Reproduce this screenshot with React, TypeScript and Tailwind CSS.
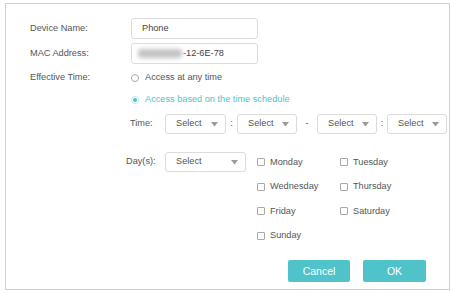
import React from 'react'

const FONT = { fontFamily: '"Liberation Sans", Arial, sans-serif' }

function Arrow() {
  return (
    <svg width="7" height="5" viewBox="0 0 7 5" className="shrink-0">
      <path d="M0 0 L7 0 L3.5 4.5 Z" fill="#9a9a9a" />
    </svg>
  )
}

function SelectBox({ width }: { width: string }) {
  return (
    <div className={`${width} shrink-0 h-[20px] border border-[#dcdcdc] rounded-[3px] bg-white flex items-center justify-between pl-[10px] pr-[7px] text-[#555]`}>
      <span>Select</span>
      <Arrow />
    </div>
  )
}

function Checkbox({ label }: { label: string }) {
  return (
    <div className="h-[24.5px] flex items-center gap-[5px]">
      <span className="w-[8px] h-[8px] border border-[#a8a8a8] rounded-[1px] bg-white shrink-0" />
      <span className="text-[#555]">{label}</span>
    </div>
  )
}

export default function App() {
  return (
    <div className="w-[453px] h-[294px] bg-white pt-[3px] pl-[5px] text-[9.2px] leading-none" style={FONT}>
      <div className="w-[445px] h-[287px] border border-[#cfcfcf] pt-[14px] pl-[24px] pr-[23px]">
        {/* device name */}
        <div className="flex items-center h-[21px]">
          <span className="w-[101px] text-[#555]">Device Name:</span>
          <div className="w-[127px] h-[21px] border border-[#dcdcdc] rounded-[3px] flex items-center pl-[10px] text-[#444]">
            Phone
          </div>
        </div>

        {/* mac */}
        <div className="flex items-center h-[21px] mt-[4px]">
          <span className="w-[101px] text-[#555]">MAC Address:</span>
          <div className="w-[127px] h-[21px] border border-[#dcdcdc] rounded-[3px] flex items-center pl-[6px] text-[#444]">
            <span className="w-[44px] h-[9px] bg-[#c4c4c4] rounded-[3px] blur-[2px] mr-[1px]" />
            <span>-12-6E-78</span>
          </div>
        </div>

        {/* effective time */}
        <div className="flex items-center h-[16px] mt-[6px]">
          <span className="w-[101px] text-[#555]">Effective Time:</span>
          <span className="w-[8px] h-[8px] rounded-full border border-[#a8a8a8] bg-white shrink-0" />
          <span className="ml-[6px] text-[#555]">Access at any time</span>
        </div>
        <div className="flex items-center h-[16px] mt-[6px] ml-[101px]">
          <span className="w-[8px] h-[8px] rounded-full border border-[#bfe6ea] bg-white flex items-center justify-center shrink-0">
            <span className="w-[4px] h-[4px] rounded-full bg-[#4ec3cb]" />
          </span>
          <span className="ml-[6px] text-[#4ec3cb]">Access based on the time schedule</span>
        </div>

        {/* time */}
        <div className="flex items-center h-[20px] mt-[6px] ml-[100px]">
          <span className="w-[35px] shrink-0 text-[#555]">Time:</span>
          <SelectBox width="w-[61px]" />
          <span className="w-[11px] shrink-0 text-center text-[#555]">:</span>
          <SelectBox width="w-[60px]" />
          <span className="w-[20px] shrink-0 text-center text-[#555]">-</span>
          <SelectBox width="w-[60px]" />
          <span className="w-[10px] shrink-0 text-center text-[#555]">:</span>
          <SelectBox width="w-[60px]" />
        </div>

        {/* days */}
        <div className="flex items-start mt-[18px] ml-[96px]">
          <div className="flex items-center h-[20px]">
            <span className="w-[39px] text-[#555]">Day(s):</span>
            <SelectBox width="w-[81px]" />
          </div>
          <div className="grid grid-cols-[83px_80px] ml-[11px] -mt-[2px]">
            <Checkbox label="Monday" />
            <Checkbox label="Tuesday" />
            <Checkbox label="Wednesday" />
            <Checkbox label="Thursday" />
            <Checkbox label="Friday" />
            <Checkbox label="Saturday" />
            <Checkbox label="Sunday" />
          </div>
        </div>

        {/* buttons */}
        <div className="flex justify-end gap-[13px] mt-[12px]">
          <button className="w-[62px] h-[22px] rounded-[2px] bg-[#4fc3c9] text-white text-[10.5px]">Cancel</button>
          <button className="w-[63px] h-[22px] rounded-[2px] bg-[#4fc3c9] text-white text-[10.5px]">OK</button>
        </div>
      </div>
    </div>
  )
}
